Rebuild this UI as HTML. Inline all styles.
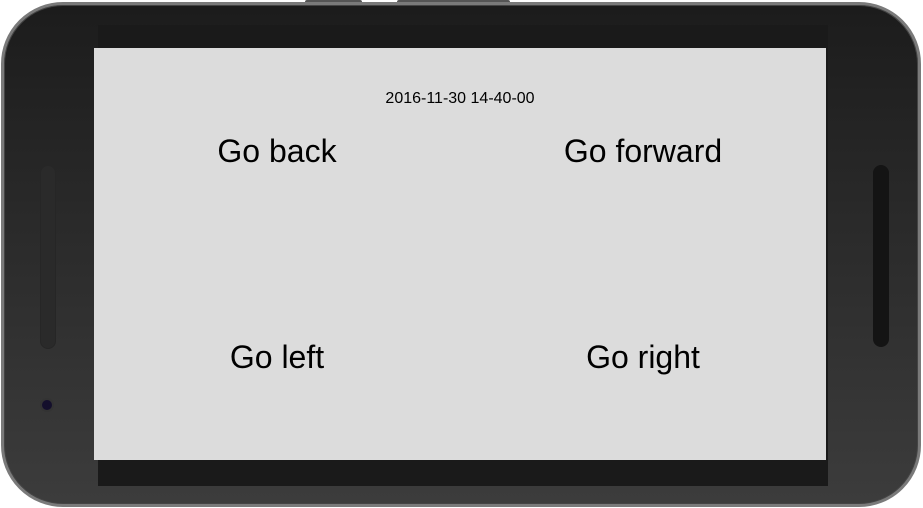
<!DOCTYPE html>
<html><head><meta charset="utf-8"><style>
html,body{margin:0;padding:0;background:#fff;width:923px;height:508px;overflow:hidden;font-family:"Liberation Sans",Arial,sans-serif}
.btn{position:absolute;top:0;height:4px;background:#555;border-radius:2px 2px 0 0}
.dev{position:absolute;left:1px;top:2px;width:914px;height:499px;border:3px solid #7a7a7a;border-radius:62px;background:linear-gradient(to bottom,#1c1c1c,#3c3c3c);box-shadow:inset 0 0 0 1px #444}
.scr2{position:absolute;left:98px;top:25px;width:730px;height:461px;background:#1a1a1a}
.scr{position:absolute;left:94px;top:48px;width:732px;height:412px;background:#dcdcdc}
.t{position:absolute;color:#000;white-space:nowrap;transform:translateX(-50%)}
.big{font-size:32px}
</style></head><body>
<div class="btn" style="left:305px;width:57px"></div>
<div class="btn" style="left:397px;width:113px"></div>
<div class="dev"></div>
<div style="position:absolute;left:40px;top:165px;width:14px;height:182px;border-radius:8px;background:#2a2a2a;border:1px solid #262626"></div>
<div style="position:absolute;left:873px;top:165px;width:16px;height:182px;border-radius:8px;background:#141414"></div>
<div style="position:absolute;left:42px;top:400px;width:10px;height:10px;border-radius:50%;background:#140f2c;box-shadow:0 0 0 2px #333"></div>
<div class="scr2"></div>
<div class="scr">
<div class="t" style="left:366px;top:42px;font-size:16px">2016-11-30 14-40-00</div>
<div class="t big" style="left:183px;top:85px">Go back</div>
<div class="t big" style="left:549px;top:85px">Go forward</div>
<div class="t big" style="left:183px;top:291px">Go left</div>
<div class="t big" style="left:549px;top:291px">Go right</div>
</div>
</body></html>
